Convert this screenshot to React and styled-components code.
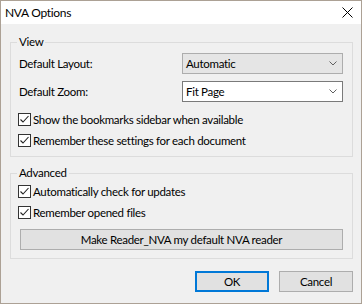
import React from 'react';
import styled, { createGlobalStyle } from 'styled-components';

const GlobalStyle = createGlobalStyle`
  html, body {
    margin: 0;
    padding: 0;
    background: #f0f0f0;
  }
  * {
    box-sizing: border-box;
  }
`;

const Window = styled.div`
  width: 362px;
  height: 304px;
  border: 1px solid #aca195;
  background: #f0f0f0;
  display: flex;
  flex-direction: column;
  font-family: Lato, 'Noto Sans', sans-serif;
  font-size: 11.5px;
  letter-spacing: -0.3px;
  color: #000;
  overflow: hidden;
`;

const TitleBar = styled.div`
  height: 23px;
  background: #fff;
  display: flex;
  align-items: center;
  justify-content: space-between;
  padding: 0 8px 0 4px;
  font-size: 12px;
`;

const Body = styled.div`
  flex: 1;
  display: flex;
  flex-direction: column;
  padding: 10px 8px 0 9px;
`;

const Group = styled.fieldset`
  margin: ${(p) => (p.$first ? '0' : '8px 0 0')};
  padding: 0 9px ${(p) => p.$bottom}px 6px;
  border: 1px solid #dcdcdc;
  display: flex;
  flex-direction: column;
  min-width: 0;

  legend {
    padding: 0 2px;
    line-height: 16px;
    height: 16px;
  }
`;

const FieldRow = styled.div`
  display: grid;
  grid-template-columns: 1fr 161px;
  align-items: center;
  height: 21px;
  margin-top: ${(p) => p.$top}px;
  padding-left: 2px;
`;

const Combo = styled.div`
  height: 21px;
  display: flex;
  align-items: center;
  justify-content: space-between;
  padding: 0 5px 0 3px;
  border: 1px solid ${(p) => (p.$disabled ? '#adadad' : '#7a7a7a')};
  background: ${(p) => (p.$disabled ? '#e5e5e5' : '#fff')};
`;

const CheckRow = styled.label`
  display: flex;
  align-items: center;
  height: 21px;
  margin-top: ${(p) => p.$top || 0}px;
  padding-left: 1px;
  gap: 2px;
`;

const Box = styled.span`
  width: 13px;
  height: 13px;
  border: 1px solid #333;
  background: #fff;
  display: flex;
  flex-shrink: 0;
`;

const WideButton = styled.div`
  height: 21px;
  margin: 6px 0 0 3px;
  border: 1px solid #adadad;
  background: #e1e1e1;
  display: flex;
  align-items: center;
  justify-content: center;
`;

const Footer = styled.div`
  display: flex;
  justify-content: flex-end;
  gap: 10px;
  margin-top: 12px;
`;

const DialogButton = styled.div`
  width: 74px;
  height: 21px;
  border: ${(p) => (p.$default ? '2px solid #0078d7' : '1px solid #adadad')};
  background: #e1e1e1;
  display: flex;
  align-items: center;
  justify-content: center;
`;

function Chevron() {
  return (
    <svg width="8" height="5" viewBox="0 0 8 5">
      <path d="M0.5 0.5 L4 4 L7.5 0.5" fill="none" stroke="#606060" strokeWidth="1" />
    </svg>
  );
}

function Close() {
  return (
    <svg width="11" height="11" viewBox="0 0 11 11">
      <path d="M0.5 0.5 L10.5 10.5 M10.5 0.5 L0.5 10.5" stroke="#000" strokeWidth="1" />
    </svg>
  );
}

function Checkbox({ label, top }) {
  return (
    <CheckRow $top={top}>
      <Box>
        <svg width="11" height="11" viewBox="0 0 11 11">
          <path d="M1.5 5.5 L4 8 L9.5 2" fill="none" stroke="#222" strokeWidth="1.1" />
        </svg>
      </Box>
      <span>{label}</span>
    </CheckRow>
  );
}

export default function App() {
  return (
    <>
      <GlobalStyle />
      <Window>
        <TitleBar>
          <span>NVA Options</span>
          <Close />
        </TitleBar>
        <Body>
          <Group $first $bottom={5}>
            <legend>View</legend>
            <FieldRow $top={3}>
              <span>Default Layout:</span>
              <Combo $disabled>
                <span>Automatic</span>
                <Chevron />
              </Combo>
            </FieldRow>
            <FieldRow $top={7}>
              <span>Default Zoom:</span>
              <Combo>
                <span>Fit Page</span>
                <Chevron />
              </Combo>
            </FieldRow>
            <Checkbox top={7} label="Show the bookmarks sidebar when available" />
            <Checkbox label="Remember these settings for each document" />
          </Group>
          <Group $bottom={8}>
            <legend>Advanced</legend>
            <Checkbox label="Automatically check for updates" />
            <Checkbox label="Remember opened files" />
            <WideButton>Make Reader_NVA my default NVA reader</WideButton>
          </Group>
          <Footer>
            <DialogButton $default>OK</DialogButton>
            <DialogButton>Cancel</DialogButton>
          </Footer>
        </Body>
      </Window>
    </>
  );
}
